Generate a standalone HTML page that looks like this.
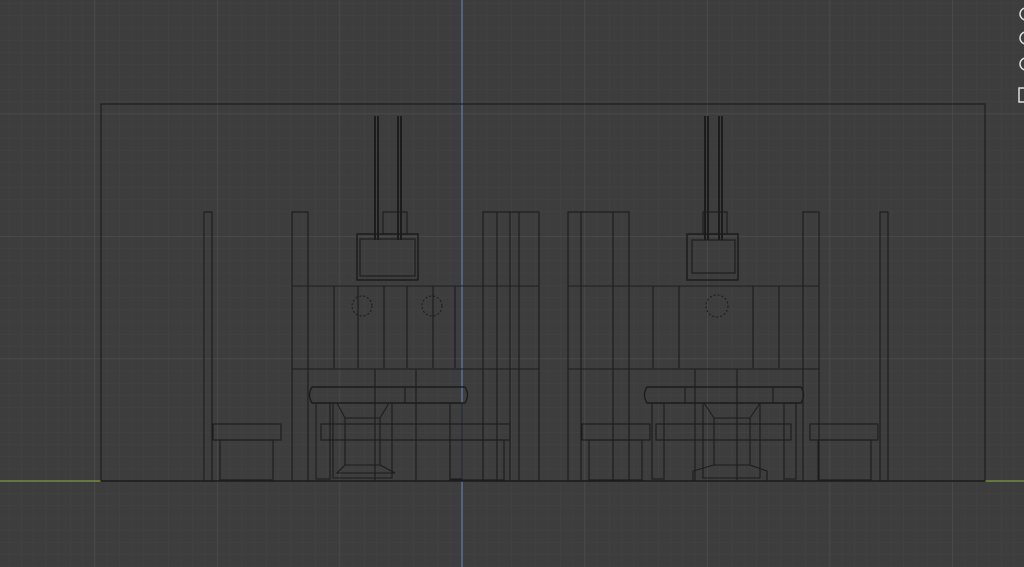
<!DOCTYPE html>
<html><head><meta charset="utf-8"><style>
html,body{margin:0;padding:0;background:#3d3d3d;width:1024px;height:567px;overflow:hidden}
svg{display:block}
</style></head><body>
<svg width="1024" height="567" viewBox="0 0 1024 567" xmlns="http://www.w3.org/2000/svg">
<defs>
<pattern id="mi" width="12.25" height="12.25" patternUnits="userSpaceOnUse" x="8.75" y="3.25">
<path d="M0 0H12.25M0 0V12.25" stroke="#444" stroke-width="1" fill="none"/>
</pattern>
<pattern id="ma" width="122.5" height="122.5" patternUnits="userSpaceOnUse" x="94.5" y="113.5">
<path d="M0 0H122.5M0 0V122.5" stroke="#4e4e4e" stroke-width="1.2" fill="none"/>
</pattern>
</defs>
<rect width="1024" height="567" fill="#3d3d3d"/>
<rect width="1024" height="567" fill="url(#mi)"/>
<rect width="1024" height="567" fill="url(#ma)"/>
<line x1="462" y1="0" x2="462" y2="567" stroke="#5a78a8" stroke-width="1.3"/>
<line x1="0" y1="481" x2="101" y2="481" stroke="#7a9a3a" stroke-width="1.3"/>
<line x1="985" y1="481" x2="1024" y2="481" stroke="#7a9a3a" stroke-width="1.3"/>
<g fill="none" stroke="#1c1c1c" stroke-width="1.1">
<rect x="101" y="104" width="884" height="377"/>
<line x1="101" y1="481" x2="985" y2="481" stroke-width="1.5"/>
<rect x="204" y="212" width="8" height="269"/>
<rect x="292" y="212" width="16" height="269"/>
<line x1="292" y1="286" x2="539" y2="286"/><line x1="292" y1="369" x2="539" y2="369"/>
<line x1="334" y1="286" x2="334" y2="368"/><line x1="358" y1="286" x2="358" y2="368"/>
<line x1="384" y1="286" x2="384" y2="368"/><line x1="407" y1="286" x2="407" y2="368"/>
<line x1="433" y1="286" x2="433" y2="368"/><line x1="455" y1="286" x2="455" y2="368"/>
<line x1="375" y1="369" x2="375" y2="481"/><line x1="416" y1="369" x2="416" y2="481"/>
<rect x="483" y="212" width="56" height="269"/>
<line x1="497" y1="212" x2="497" y2="481"/><line x1="510" y1="212" x2="510" y2="481"/><line x1="519" y1="212" x2="519" y2="481"/>
<rect x="357" y="234" width="61" height="46" stroke-width="1.5"/>
<rect x="360" y="239" width="55" height="37"/>
<rect x="383" y="212" width="24" height="22"/>
<path d="M375 116V240M378 116V240M398 116V240M401 116V240" stroke-width="2"/>
<circle cx="362" cy="306" r="10" stroke-dasharray="2 2"/><circle cx="432" cy="306" r="10" stroke-dasharray="2 2"/>
<path d="M312 387H465Q470 395 465 403H312Q307 395 312 387Z" stroke-width="1.4"/>
<line x1="405" y1="387" x2="405" y2="403"/>
<rect x="316" y="403" width="14" height="76"/><rect x="450" y="403" width="12" height="76"/>
<path d="M333 403H392V478H333Z M337 403L345 418H380L389 403 M345 418V465H380V418 M345 465L337 473H395L380 465"/>
<rect x="213" y="424" width="68" height="16"/><rect x="220" y="440" width="53" height="40"/>
<rect x="321" y="424" width="189" height="16"/>
<rect x="450" y="440" width="54" height="40"/>
<rect x="568" y="212" width="61" height="269"/>
<line x1="581" y1="212" x2="581" y2="481"/><line x1="613" y1="212" x2="613" y2="481"/>
<line x1="568" y1="286" x2="819" y2="286"/><line x1="568" y1="369" x2="819" y2="369"/>
<line x1="653" y1="286" x2="653" y2="368"/><line x1="679" y1="286" x2="679" y2="368"/>
<line x1="753" y1="286" x2="753" y2="368"/><line x1="779" y1="286" x2="779" y2="368"/>
<line x1="695" y1="369" x2="695" y2="481"/><line x1="737" y1="369" x2="737" y2="481"/>
<rect x="803" y="212" width="16" height="269"/>
<rect x="880" y="212" width="8" height="269"/>
<rect x="687" y="234" width="51" height="46" stroke-width="1.5"/>
<rect x="692" y="240" width="43" height="33"/>
<rect x="703" y="212" width="24" height="22"/>
<path d="M705 116V240M708 116V240M719 116V240M722 116V240" stroke-width="2"/>
<circle cx="717" cy="306" r="11" stroke-dasharray="2 2"/>
<path d="M647 387H801Q806 395 801 403H647Q642 395 647 387Z" stroke-width="1.4"/>
<line x1="685" y1="387" x2="685" y2="403"/><line x1="773" y1="387" x2="773" y2="403"/>
<rect x="652" y="403" width="12" height="76"/><rect x="784" y="403" width="12" height="76"/>
<path d="M703 403H760V478H703Z M704 403L714 418H750L760 403 M714 418V465H750V418 M714 465L693 471V481H767V471L750 465"/>
<rect x="582" y="424" width="68" height="16"/><rect x="589" y="440" width="53" height="40"/>
<rect x="656" y="424" width="135" height="16"/>
<rect x="810" y="424" width="68" height="16"/><rect x="818" y="440" width="53" height="40"/>
</g>
<g fill="none" stroke="#ddd" stroke-width="1.5">
<circle cx="1026" cy="14" r="6"/><circle cx="1026" cy="38" r="6"/><circle cx="1026" cy="64" r="6"/><rect x="1019" y="88" width="10" height="14"/>
</g>
</svg>
</body></html>
